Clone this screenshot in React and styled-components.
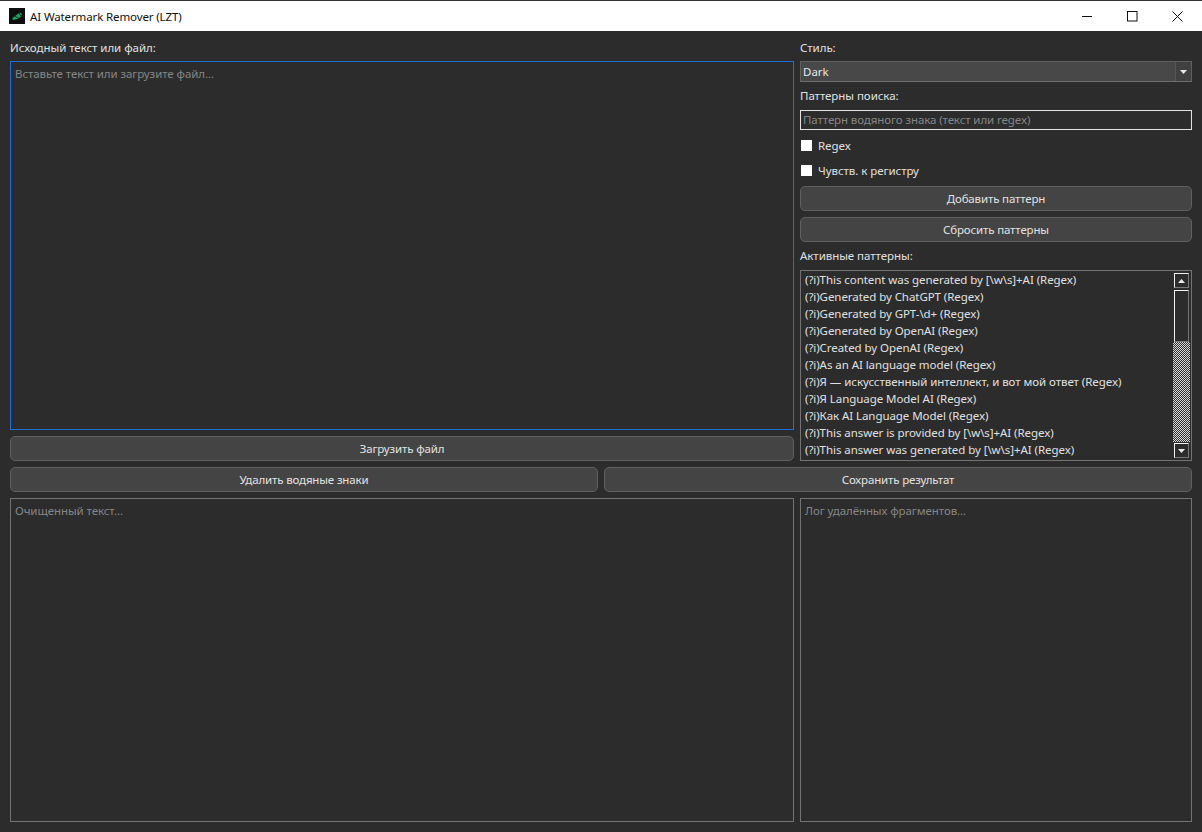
import React from "react";
import styled, { createGlobalStyle } from "styled-components";

const Global = createGlobalStyle`
  html, body { margin: 0; padding: 0; background: #2c2c2c; }
  body { font-family: "Noto Sans", "Open Sans", sans-serif; font-size: 11.5px; color: #e0e0e0; }
  * { box-sizing: border-box; }
`;

const Window = styled.div`
  width: 1202px; height: 832px; display: flex; flex-direction: column; background: #2c2c2c; overflow: hidden;
`;
const TitleBar = styled.header`
  height: 31px; flex: none; background: #fff; border-top: 1px solid #333; display: flex; align-items: center;
  padding: 0 2px 0 9px; color: #111; font-size: 11.5px;
`;
const TitleText = styled.span`margin-left: 5px; flex: 1; letter-spacing: -0.12px;`;
const WinButton = styled.div`
  width: 45px; height: 30px; display: flex; align-items: center; justify-content: center;
`;
const Body = styled.main`
  flex: 1; display: flex; flex-direction: column; padding: 8px 10px 10px; gap: 6px; min-height: 0;
`;
const Top = styled.section`display: flex; gap: 6px; height: 422px; flex: none;`;
const Left = styled.div`width: 784px; display: flex; flex-direction: column; gap: 6px;`;
const Right = styled.div`width: 392px; display: flex; flex-direction: column;`;
const Label = styled.div`
  height: ${p => p.$h}px; line-height: ${p => p.$lh || p.$h}px; color: #e0e0e0; font-size: 11.5px; flex: none;
  letter-spacing: -0.05px;
`;
const TextPane = styled.div`
  flex: 1; min-height: 0; background: #2c2c2c; color: #868686; padding: 3px 4px;
  line-height: 17px; font-size: 11.5px; letter-spacing: -0.08px;
  border: 1px solid ${p => (p.$focus ? "#1b6fd6" : "#737373")};
`;
const Btn = styled.button`
  flex: ${p => (p.$grow ? 1 : "none")}; height: 25px; width: ${p => (p.$grow ? "auto" : "100%")};
  border-radius: 5px; border: 1px solid #606060; margin-top: ${p => p.$mt || 0}px;
  background: #444; color: #e2e2e2; font: inherit; font-size: 11.5px; padding: 0; letter-spacing: -0.15px;
`;
const Combo = styled.div`
  height: 21px; flex: none; background: #484848; border: 1px solid #606060; border-bottom-color: #6e6e6e;
  display: flex; align-items: center; justify-content: space-between; padding-left: 2px; color: #e6e6e6; font-size: 11.5px;
`;
const ComboArrow = styled.div`
  width: 16px; height: 19px; background: #404040; border-left: 1px solid #555; display: flex; align-items: center; justify-content: center;
`;
const Input = styled.div`
  height: 20px; flex: none; background: #2c2c2c; border: 1px solid #e4e4e4; color: #868686; padding-left: 2px;
  line-height: 17px; font-size: 11.5px; letter-spacing: -0.1px;
`;
const Checks = styled.div`display: flex; flex-direction: column; padding: 3px 0 3px;`;
const CheckRow = styled.label`
  height: 25px; display: flex; align-items: center; gap: 6px; color: #e0e0e0; font-size: 11.5px; padding-left: 1px;
  letter-spacing: -0.05px;
`;
const Box = styled.span`width: 11px; height: 11px; background: #fff; flex: none;`;
const List = styled.div`
  height: 191px; flex: none; border: 1px solid #737373; display: flex; overflow: hidden;
`;
const Items = styled.div`flex: 1; padding-left: 4px; min-width: 0; overflow: hidden;`;
const Item = styled.div`
  height: 17px; line-height: 17px; color: #e0e0e0; font-size: 11.5px; white-space: nowrap; letter-spacing: -0.06px;
`;
const Scroll = styled.div`
  width: 17px; flex: none; display: flex; flex-direction: column; align-items: center;
  margin: 1px 1px 1px 0;
`;
const ScrollBtn = styled.div`
  width: 15px; height: 15px; flex: none; background: #2c2c2c; border: 1px solid #f0f0f0; border-right-color: #777; border-bottom-color: #777;
  display: flex; align-items: center; justify-content: center;
  margin: ${p => (p.$end ? "0 0 1px" : "1px 0 0")};
`;
const Thumb = styled.div`
  width: 15px; height: 52px; flex: none; margin-top: 2px; background: #2c2c2c; border: 1px solid #f0f0f0; border-right-color: #777; border-bottom-color: #777;
`;
const Track = styled.div`
  flex: 1; align-self: stretch; margin-bottom: 1px;
  background-color: #2c2c2c;
  background-image: conic-gradient(#ddd 25%, #2c2c2c 0 50%, #ddd 0 75%, #2c2c2c 0);
  background-size: 2px 2px;
`;
const Row = styled.section`display: flex; gap: 6px; height: 25px; flex: none;`;
const Bottom = styled.section`display: flex; gap: 6px; flex: 1; min-height: 0;`;
const BottomLeft = styled.div`width: 784px; display: flex;`;
const BottomRight = styled.div`width: 392px; display: flex;`;

const patterns = [
  "(?i)This content was generated by [\\w\\s]+AI (Regex)",
  "(?i)Generated by ChatGPT (Regex)",
  "(?i)Generated by GPT-\\d+ (Regex)",
  "(?i)Generated by OpenAI (Regex)",
  "(?i)Created by OpenAI (Regex)",
  "(?i)As an AI language model (Regex)",
  "(?i)Я — искусственный интеллект, и вот мой ответ (Regex)",
  "(?i)Я Language Model AI (Regex)",
  "(?i)Как AI Language Model (Regex)",
  "(?i)This answer is provided by [\\w\\s]+AI (Regex)",
  "(?i)This answer was generated by [\\w\\s]+AI (Regex)",
];

const Tri = ({ up }) => (
  <svg width="7" height="4" viewBox="0 0 7 4">
    <path d={up ? "M3.5 0L7 4H0Z" : "M0 0H7L3.5 4Z"} fill="#e8e8e8" />
  </svg>
);

const AppIcon = () => (
  <svg width="16" height="16" viewBox="0 0 16 16">
    <rect width="16" height="16" fill="#0c0f0e" />
    <path d="M3 10.5L8 6.5L11 4.5L13 6L11.5 9L8 11L4.5 12Z" fill="#17a35f" />
    <path d="M6 8L9 10M10 5L12 8" stroke="#0c0f0e" strokeWidth="0.8" />
  </svg>
);

export default function App() {
  return (
    <Window>
      <Global />
      <TitleBar>
        <AppIcon />
        <TitleText>AI Watermark Remover (LZT)</TitleText>
        <WinButton>
          <svg width="11" height="11" viewBox="0 0 11 11"><path d="M0 5.5H10" stroke="#111" /></svg>
        </WinButton>
        <WinButton>
          <svg width="11" height="11" viewBox="0 0 11 11"><rect x="0.5" y="0.5" width="9.5" height="9.5" fill="none" stroke="#111" /></svg>
        </WinButton>
        <WinButton>
          <svg width="11" height="11" viewBox="0 0 11 11"><path d="M0.5 0.5L10.5 10.5M10.5 0.5L0.5 10.5" stroke="#111" /></svg>
        </WinButton>
      </TitleBar>
      <Body>
        <Top>
          <Left>
            <Label $h={16} $lh={18}>Исходный текст или файл:</Label>
            <TextPane $focus>Вставьте текст или загрузите файл...</TextPane>
            <Btn>Загрузить файл</Btn>
          </Left>
          <Right>
            <Label $h={22} $lh={18}>Стиль:</Label>
            <Combo>Dark<ComboArrow><Tri /></ComboArrow></Combo>
            <Label $h={28}>Паттерны поиска:</Label>
            <Input>Паттерн водяного знака (текст или regex)</Input>
            <Checks>
              <CheckRow><Box />Regex</CheckRow>
              <CheckRow><Box />Чувств. к регистру</CheckRow>
            </Checks>
            <Btn>Добавить паттерн</Btn>
            <Btn $mt={6}>Сбросить паттерны</Btn>
            <Label $h={28}>Активные паттерны:</Label>
            <List>
              <Items>{patterns.map(p => <Item key={p}>{p}</Item>)}</Items>
              <Scroll>
                <ScrollBtn><Tri up /></ScrollBtn>
                <Thumb />
                <Track />
                <ScrollBtn $end><Tri /></ScrollBtn>
              </Scroll>
            </List>
          </Right>
        </Top>
        <Row>
          <Btn $grow>Удалить водяные знаки</Btn>
          <Btn $grow>Сохранить результат</Btn>
        </Row>
        <Bottom>
          <BottomLeft><TextPane>Очищенный текст...</TextPane></BottomLeft>
          <BottomRight><TextPane>Лог удалённых фрагментов...</TextPane></BottomRight>
        </Bottom>
      </Body>
    </Window>
  );
}
